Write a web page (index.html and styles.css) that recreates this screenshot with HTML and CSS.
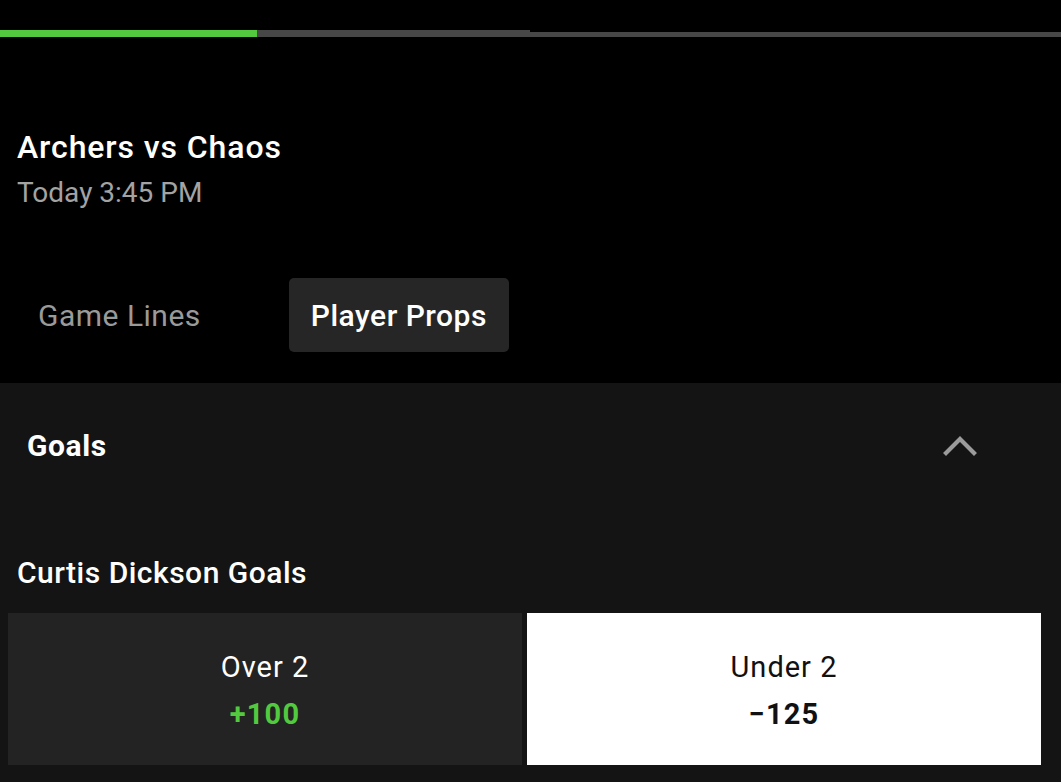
FILE: index.html
```html
<!DOCTYPE html>
<html lang="en">
<head>
<meta charset="utf-8">
<title>Archers vs Chaos</title>
<link rel="stylesheet" href="styles.css">
</head>
<body>
<div class="progress">
  <div class="seg seg-done"></div>
  <div class="seg seg-mid"></div>
  <div class="seg seg-rest"></div>
</div>
<header class="event">
  <h1 class="event-title">Archers vs Chaos</h1>
  <div class="event-time">Today 3:45 PM</div>
</header>
<nav class="tabs">
  <div class="tab">Game Lines</div>
  <div class="tab tab-active">Player Props</div>
</nav>
<section class="panel">
  <div class="panel-head">
    <h2 class="panel-title">Goals</h2>
    <svg class="chevron" width="34" height="20" viewBox="0 0 34 20" aria-hidden="true">
      <path d="M3 17 L17 3 L31 17" fill="none" stroke="#9b9b9b" stroke-width="4.2" stroke-linecap="square" stroke-linejoin="miter"/>
    </svg>
  </div>
  <h3 class="market-title">Curtis Dickson Goals</h3>
  <div class="odds">
    <div class="odd">
      <div class="odd-label">Over 2</div>
      <div class="odd-price price-pos">+100</div>
    </div>
    <div class="odd odd-selected">
      <div class="odd-label">Under 2</div>
      <div class="odd-price">−125</div>
    </div>
  </div>
</section>
</body>
</html>
```
FILE: styles.css
```css
html, body {
  margin: 0;
  padding: 0;
}
body {
  background: #000;
  color: #fff;
  font-family: Roboto, "Noto Sans", "Liberation Sans", sans-serif;
  width: 1061px;
  height: 782px;
  overflow: hidden;
  display: flex;
  flex-direction: column;
}
.progress {
  display: flex;
  align-items: flex-end;
  margin-top: 30px;
  height: 7px;
}
.seg { height: 7px; }
.seg-done { width: 257px; background: #52c93f; }
.seg-mid { width: 273px; background: #474747; }
.seg-rest { flex: 1; height: 5px; background: #474747; }

.event {
  padding: 92px 0 0 17px;
}
.event-title {
  margin: 0;
  font-size: 32px;
  line-height: 36px;
  font-weight: 500;
  letter-spacing: 0.9px;
  color: #fff;
}
.event-time {
  margin-top: 11px;
  font-size: 28px;
  line-height: 34px;
  color: #a3a3a3;
}
.tabs {
  display: flex;
  gap: 66px;
  margin-top: 68px;
  padding-left: 16px;
}
.tab {
  height: 74px;
  padding: 0 22px;
  border-radius: 5px;
  display: flex;
  align-items: center;
  font-size: 30px;
  letter-spacing: 0.5px;
  color: #9a9a9a;
}
.tab-active {
  background: #262626;
  color: #fff;
  font-weight: 500;
}
.panel {
  flex: 1;
  margin-top: 31px;
  background: #141414;
  padding: 46px 20px 0 8px;
}
.panel-head {
  display: flex;
  align-items: center;
  justify-content: space-between;
  padding: 0 64px 0 19px;
}
.panel-title {
  margin: 0;
  font-size: 30px;
  line-height: 34px;
  font-weight: 700;
  letter-spacing: 0.6px;
}
.chevron { display: block; }
.market-title {
  margin: 93px 0 0 9px;
  font-size: 30px;
  line-height: 34px;
  font-weight: 500;
  letter-spacing: 0.5px;
}
.odds {
  margin-top: 23px;
  display: grid;
  grid-template-columns: 1fr 1fr;
  gap: 5px;
}
.odd {
  height: 152px;
  box-sizing: border-box;
  padding-top: 38px;
  background: #232323;
  text-align: center;
}
.odd-selected {
  background: #fff;
  color: #111;
}
.odd-label {
  font-size: 29px;
  line-height: 32px;
  letter-spacing: 1px;
}
.odd-price {
  margin-top: 15px;
  font-size: 29px;
  line-height: 32px;
  font-weight: 700;
  letter-spacing: 1.2px;
}
.price-pos { color: #52c93f; }
```
